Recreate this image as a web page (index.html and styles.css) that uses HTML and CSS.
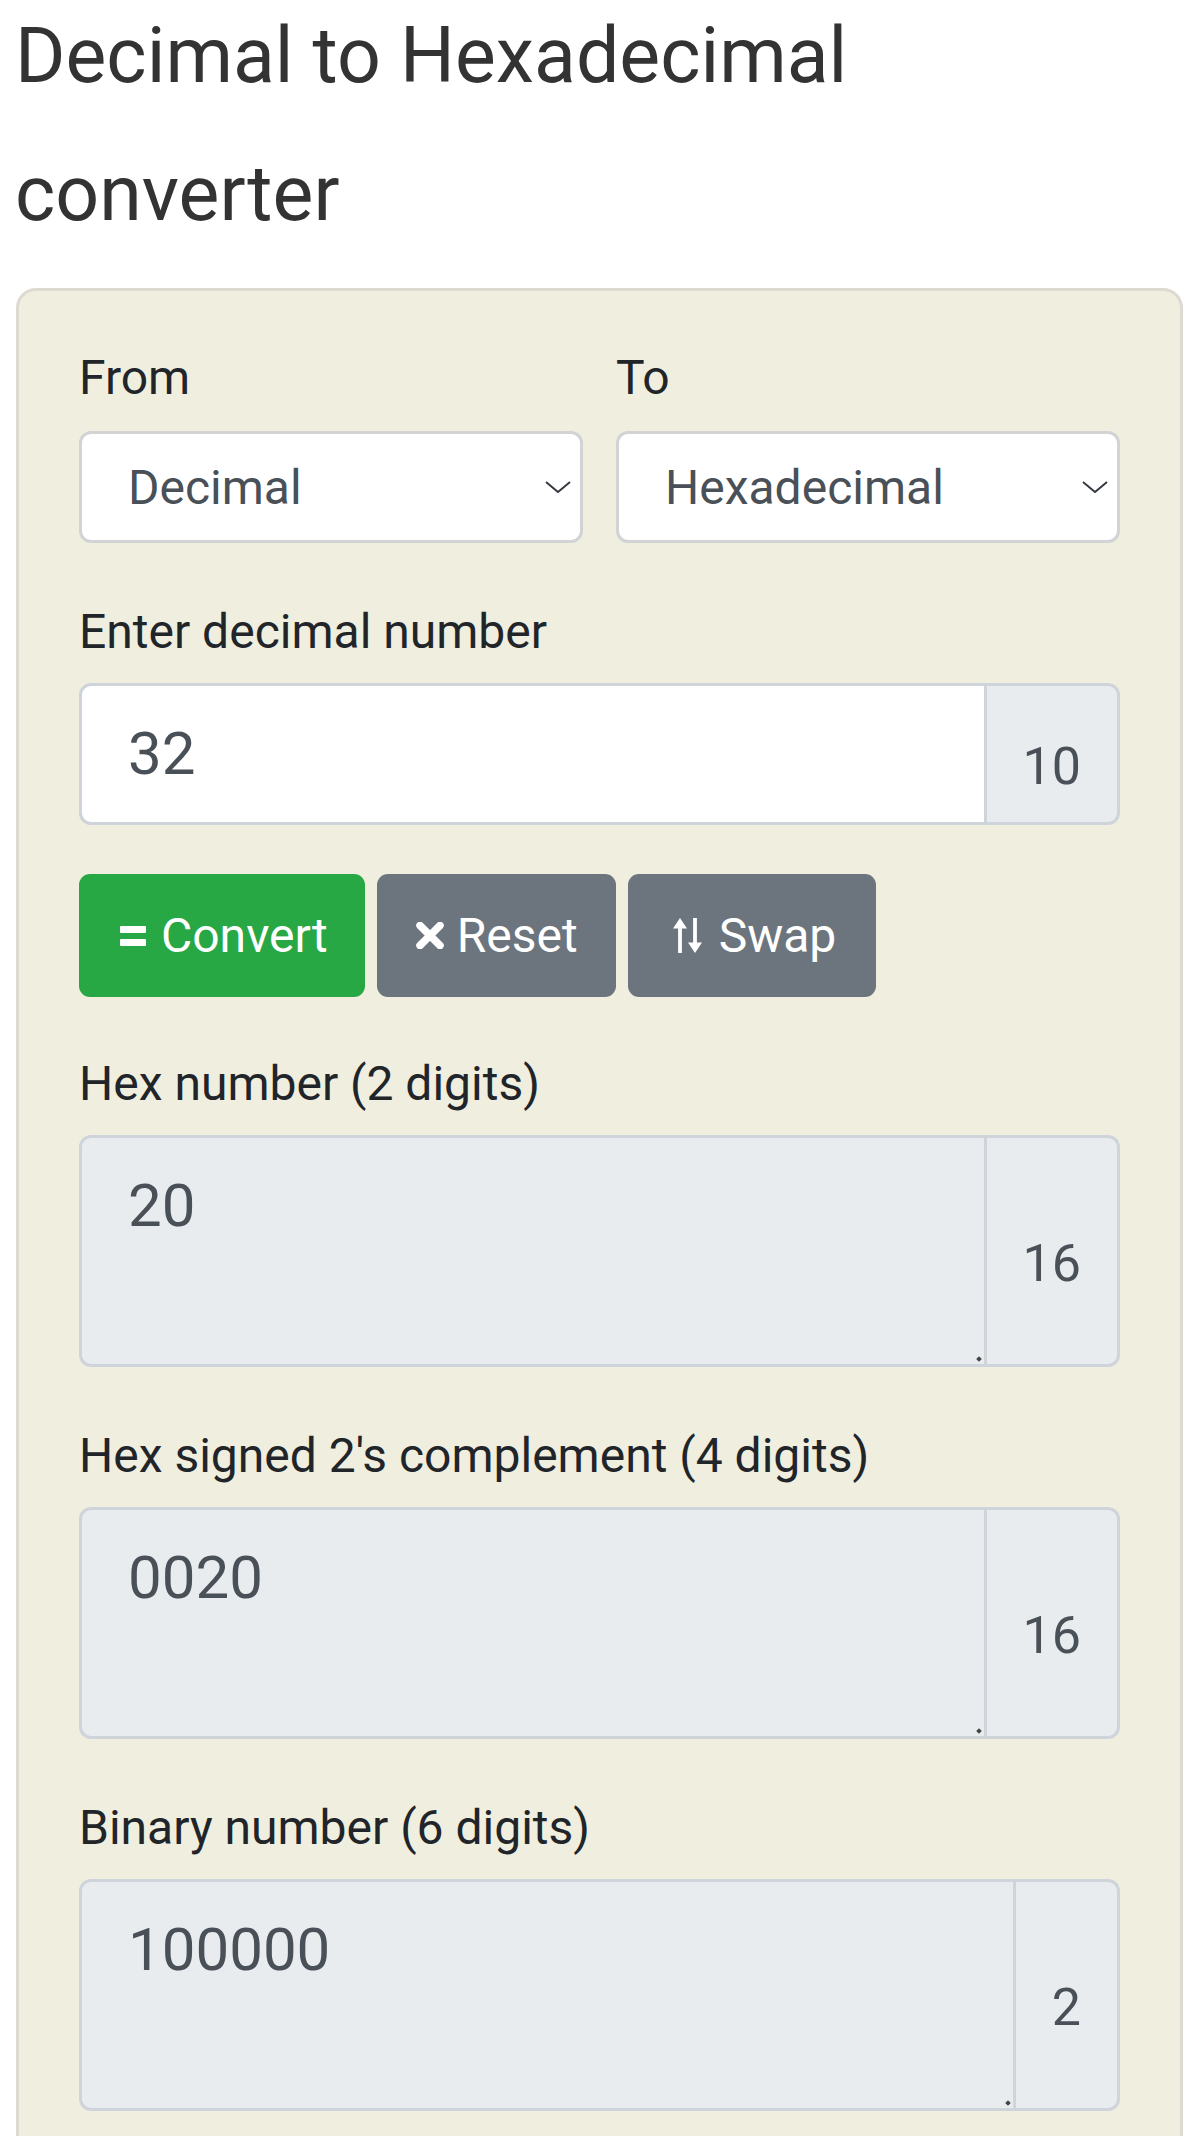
FILE: index.html
```html
<!DOCTYPE html>
<html lang="en">
<head>
<meta charset="utf-8">
<title>Decimal to Hexadecimal converter</title>
<link rel="stylesheet" href="styles.css">
</head>
<body>
<div class="page">
  <h1 class="title">Decimal to Hexadecimal converter</h1>
  <div class="card">
    <div class="row2">
      <div class="field">
        <label class="lbl">From</label>
        <div class="select"><span>Decimal</span><svg class="chev" width="26" height="12" viewBox="0 0 26 12"><polyline points="1,1 13,11 25,1" fill="none" stroke="#343a40" stroke-width="2"/></svg></div>
      </div>
      <div class="field">
        <label class="lbl">To</label>
        <div class="select"><span>Hexadecimal</span><svg class="chev" width="26" height="12" viewBox="0 0 26 12"><polyline points="1,1 13,11 25,1" fill="none" stroke="#343a40" stroke-width="2"/></svg></div>
      </div>
    </div>

    <div class="group group-input">
      <label class="lbl">Enter decimal number</label>
      <div class="igroup">
        <div class="ifield">32</div>
        <div class="addon">10</div>
      </div>
    </div>

    <div class="btns">
      <div class="btn btn-green btn-convert">
        <svg width="26" height="20" viewBox="0 0 26 20"><rect x="0" y="0" width="26" height="7" rx="1"/><rect x="0" y="13" width="26" height="7" rx="1"/></svg>
        <span>Convert</span>
      </div>
      <div class="btn btn-gray btn-reset">
        <svg width="28" height="27" viewBox="0 0 28 27"><path d="M4 3.5 L24 23.5 M24 3.5 L4 23.5" stroke="#fff" stroke-width="7.5" stroke-linecap="round" fill="none"/></svg>
        <span>Reset</span>
      </div>
      <div class="btn btn-gray btn-swap">
        <svg width="29" height="35" viewBox="0 0 29 35"><polygon points="0,10.5 7,0 14,10.5"/><rect x="5.1" y="9" width="3.8" height="26"/><rect x="20.1" y="0" width="3.8" height="26"/><polygon points="15,24.5 22,35 29,24.5"/></svg>
        <span>Swap</span>
      </div>
    </div>

    <div class="group">
      <label class="lbl">Hex number (2 digits)</label>
      <div class="igroup">
        <div class="ifield ta">20</div>
        <div class="addon">16</div>
      </div>
    </div>

    <div class="group">
      <label class="lbl">Hex signed 2's complement (4 digits)</label>
      <div class="igroup">
        <div class="ifield ta">0020</div>
        <div class="addon">16</div>
      </div>
    </div>

    <div class="group group-last">
      <label class="lbl">Binary number (6 digits)</label>
      <div class="igroup">
        <div class="ifield ta">100000</div>
        <div class="addon">2</div>
      </div>
    </div>
  </div>
</div>
</body>
</html>
```

FILE: styles.css
```css
html, body {
  margin: 0;
  padding: 0;
  background: #ffffff;
}

body {
  font-family: Roboto, "Liberation Sans", Arial, sans-serif;
  color: #212529;
}

.page {
  padding: 0 17px 0 16px;
}

.title {
  margin: -13px 0 25px -1px;
  max-width: 900px;
  font-size: 77px;
  line-height: 138px;
  font-weight: 400;
  color: #333333;
}

.card {
  border: 3px solid #dddbd1;
  border-radius: 20px;
  background: #efeedf;
  padding: 52px 60px 80px;
}

.lbl {
  display: block;
  font-size: 48px;
  line-height: 69px;
  margin-bottom: 17px;
  color: #212529;
}

.row2 {
  display: grid;
  grid-template-columns: 1fr 1fr;
  column-gap: 33px;
  margin-bottom: 54px;
}

.row2 .lbl {
  margin-bottom: 19px;
}

.select {
  box-sizing: border-box;
  height: 112px;
  border: 3px solid #d2d3d4;
  border-radius: 12px;
  background: #ffffff;
  display: flex;
  align-items: center;
  justify-content: space-between;
  padding: 0 9px 0 46px;
  font-size: 48px;
  color: #495057;
}

.group {
  margin-bottom: 54px;
}

.group-input {
  margin-bottom: 49px;
}

.igroup {
  display: flex;
}

.ifield {
  flex: 1;
  box-sizing: border-box;
  height: 142px;
  border: 3px solid #ced4da;
  border-radius: 12px 0 0 12px;
  background: #ffffff;
  padding: 24px 46px 0;
  font-size: 60px;
  line-height: 87px;
  color: #495057;
}

.ifield.ta {
  position: relative;
  height: 232px;
  background: #e9ecef;
}

.ifield.ta::after {
  content: "";
  position: absolute;
  right: 3px;
  bottom: 3px;
  width: 4px;
  height: 4px;
  background: #444;
  transform: rotate(45deg);
}

.addon {
  box-sizing: border-box;
  border: 3px solid #ced4da;
  border-left: none;
  border-radius: 0 12px 12px 0;
  background: #e9ecef;
  padding: 24px 36px 0;
  display: flex;
  align-items: center;
  font-size: 52px;
  line-height: 75px;
  color: #495057;
}

.btns {
  display: flex;
  gap: 12px;
  margin-bottom: 52px;
}

.btn {
  box-sizing: border-box;
  height: 123px;
  border-radius: 11px;
  display: flex;
  align-items: center;
  font-size: 48px;
  color: #ffffff;
  fill: #ffffff;
}

.btn svg {
  flex: none;
}

.btn-green {
  background: #28a745;
}

.btn-gray {
  background: #6c757d;
}

.btn-convert {
  padding: 0 37px 0 41px;
  gap: 15px;
}

.btn-reset {
  padding: 0 38px 0 39px;
  gap: 13px;
}

.btn-swap {
  padding: 0 40px 0 45px;
  gap: 17px;
}
```
